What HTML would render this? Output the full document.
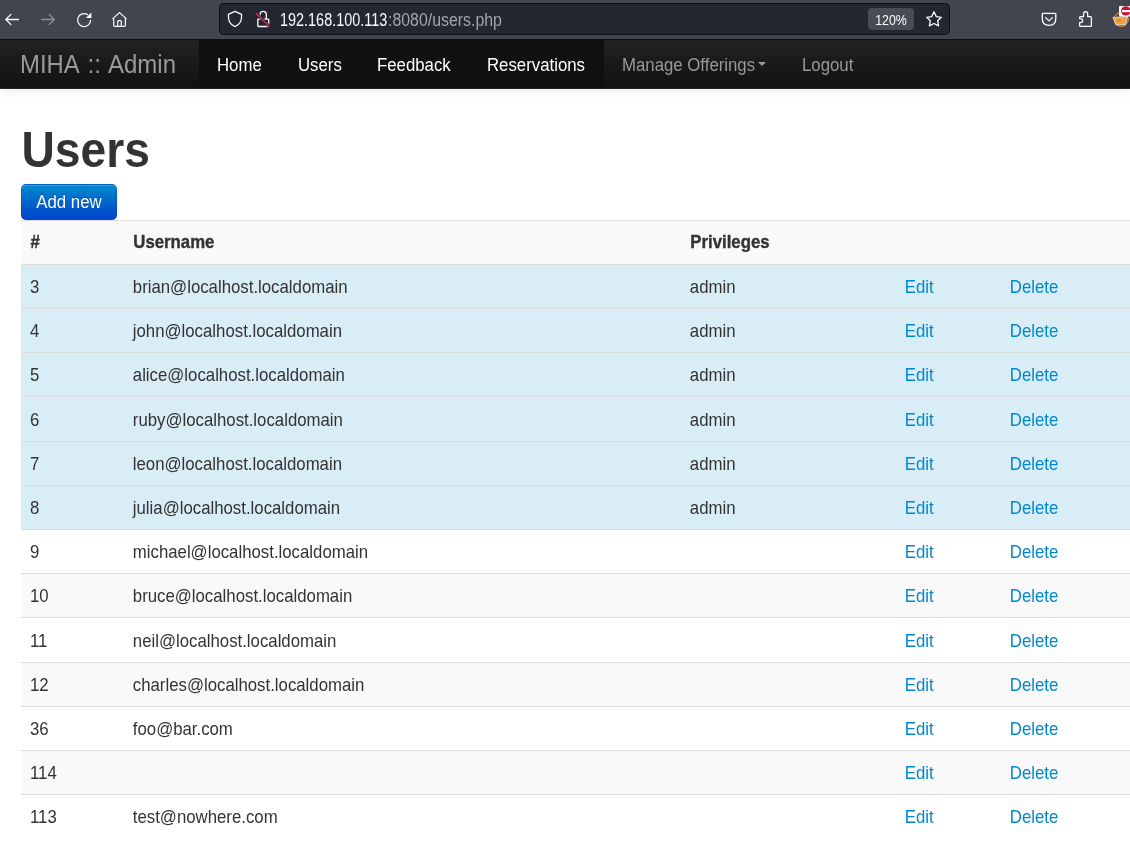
<!DOCTYPE html>
<html><head><meta charset="utf-8">
<style>
html,body{margin:0;padding:0;}
#root{position:absolute;left:0;top:0;width:1130px;height:841px;overflow:hidden;background:#fff;will-change:transform;}
body{width:1130px;height:841px;overflow:hidden;position:relative;background:#fff;font-family:"Liberation Sans",sans-serif;color:#333;font-size:16.8px;line-height:24px;}
#tb{position:absolute;left:0;top:0;width:1130px;height:40px;background:#43454e;z-index:5;}
#urlh,#urlp{position:absolute;top:8px;font-size:15.1px;line-height:22px;white-space:nowrap;transform-origin:0 6px;}
#urlh{left:280.3px;color:#fbfbfe;transform:scaleX(0.956) scaleY(1.2);}
#urlp{left:388.2px;color:#a3a4aa;transform:scaleX(1.052) scaleY(1.2);}
#zoomt{position:absolute;left:868px;top:8.6px;width:46px;height:22px;color:#fbfbfe;font-size:12.4px;line-height:23px;text-align:center;transform:scaleY(1.12);transform-origin:0 6px;}
svg{position:absolute;overflow:visible;}
#nav{position:absolute;left:0;top:40px;width:1130px;height:49px;box-sizing:border-box;background:linear-gradient(#222,#111);border-bottom:1px solid #252525;box-shadow:0 1px 10px rgba(0,0,0,.1);}
#brand{position:absolute;left:20px;top:11px;font-size:24.5px;line-height:24px;color:#999;white-space:nowrap;transform:translateY(1.6px) scaleY(1.04);transform-origin:0 12px;}
#brand span{position:absolute;top:0;transform-origin:0 0;}
#bc{left:67.5px;}
#ba{left:88.2px;}
.ni{position:absolute;top:0;height:48px;line-height:48px;color:#999;white-space:nowrap;}
.ni span{position:absolute;left:18px;top:0;transform:translateY(1.6px) scaleY(1.07);transform-origin:0 24px;}
.ni.a{background:#111;color:#fff;box-shadow:inset 0 3px 8px rgba(0,0,0,.125);}
.caret{position:absolute;left:758px;top:22px;width:0;height:0;border-top:4.8px solid #999;border-left:4.8px solid transparent;border-right:4.8px solid transparent;}
h1{position:absolute;left:21.5px;top:126px;margin:0;font-size:46.2px;line-height:48px;font-weight:bold;color:#333;transform:translateY(-0.7px) scaleY(1.087);transform-origin:0 24px;}
#btn span{display:inline-block;transform:scaleY(1.07);transform-origin:0 10px;}
#btn{position:absolute;left:21px;top:184px;width:96px;height:36px;box-sizing:border-box;border:1px solid rgba(0,0,0,.1);border-bottom-color:rgba(0,0,0,.25);border-radius:5px;background:#006dcc linear-gradient(#0088cc,#0044cc) repeat-x;color:#fff;text-shadow:0 -1px 0 rgba(0,0,0,.25);box-shadow:inset 0 1px 0 rgba(255,255,255,.2);line-height:33px;text-align:center;}
#tbl{position:absolute;left:0;top:0;}
.r{position:absolute;left:21px;width:1128px;box-sizing:border-box;border-top:1px solid #ddd;background:#fff;}
.r.s{background:#f9f9f9;}
.r.i{background:#d9edf7;}
.r.h .c{font-weight:bold;-webkit-text-stroke:0.35px #333;margin-top:-1px;margin-left:0.5px;}
.c{position:absolute;top:10.4px;line-height:24px;white-space:nowrap;transform:scaleY(1.06);transform-origin:0 6px;}
.r.d1 .c{top:11.4px;}
a{color:#0088cc;text-decoration:none;}
</style></head><body><div id="root">
<div id="tb">
<svg width="1130" height="40" viewBox="0 0 1130 40" style="left:0;top:0" fill="none" stroke-linecap="round" stroke-linejoin="round">
<rect x="0" y="39" width="1130" height="1" fill="#0f1014" stroke="none"/>
<g stroke="#fbfbfe" stroke-width="1.3">
<path d="M18.5 19.5H5.8M10.9 14.4L5.8 19.5L10.9 24.6"/>
</g>
<g stroke="#8f9095" stroke-width="1.3">
<path d="M41.6 19.5H54.3M49.2 14.4L54.3 19.5L49.2 24.6"/>
</g>
<g stroke="#fbfbfe" stroke-width="1.2">
<path d="M90.6 20.4A6.5 6.5 0 1 1 87.6 14.6"/>
<path d="M85.8 17.9L91.4 12.5L91.4 18.1Z" fill="#fbfbfe" stroke="none"/>
<path d="M119.5 12.6L112.8 18.6M119.5 12.6L126.2 18.6M113.7 17.9V25.3Q113.7 26.4 114.8 26.4H124.3Q125.4 26.4 125.4 25.3V17.9M117.7 26.4V21.6Q117.7 20.7 118.6 20.7H120.4Q121.3 20.7 121.3 21.6V26.4"/>
</g>
<rect x="219.5" y="3.5" width="730" height="31" rx="4" fill="#242631" stroke="#0f1014" stroke-width="1"/>
<g stroke="#fbfbfe" stroke-width="1.3">
<path d="M235 11.4L228.4 14.4Q228.2 19.2 229.6 22Q231.4 25.3 235 26.6Q238.6 25.3 240.4 22Q241.8 19.2 241.6 14.4Z"/>
<path d="M257.8 19.2H268.3Q268.7 19.2 268.7 19.6V26.1Q268.7 26.5 268.3 26.5H258.2Q257.8 26.5 257.8 26.1ZM260 19V14.6Q260 11.4 263.3 11.4Q266.3 11.4 266.3 14.6V19"/>
</g>
<path d="M256.2 13.4L269.4 26.4" stroke="#242631" stroke-width="3"/>
<path d="M256.2 13.4L269.4 26.4" stroke="#e22850" stroke-width="1.4"/>
<rect x="868" y="8" width="46" height="22" rx="4" fill="#4a4c55" stroke="none"/>
<g stroke="#fbfbfe" stroke-width="1.3">
<path d="M934 11.8L936.3 16.6L941.3 17.3L937.7 20.8L938.6 25.9L934 23.5L929.4 25.9L930.3 20.8L926.7 17.3L931.7 16.6Z"/>
<path d="M1043 13.3H1055.1Q1055.8 13.3 1055.8 14V18.4Q1055.8 25.3 1049 25.3Q1042.3 25.3 1042.3 18.4V14Q1042.3 13.3 1043 13.3Z"/>
<path d="M1045.6 17.6L1049 20.9L1052.4 17.6"/>
<path d="M1080.6 16.6H1083.5V14.2Q1083.5 11.6 1085.6 11.6Q1087.7 11.6 1087.7 14.2V16.6H1090.4Q1091.4 16.6 1091.4 17.6V25.4Q1091.4 26.4 1090.4 26.4H1080.6Q1079.6 26.4 1079.6 25.4V22.6H1080.4Q1082.6 22.6 1082.6 20.6Q1082.6 18.6 1080.4 18.6H1079.6V17.6Q1079.6 16.6 1080.6 16.6Z"/>
</g>
<circle cx="1121.3" cy="19.4" r="7.1" fill="#4a4a4e" stroke="#e89a45" stroke-width="1"/>
<path d="M1113.4 17.4L1127.6 16.6L1125.4 24.6L1116.4 24.9Z" fill="#f4a035" stroke="#dcdcdc" stroke-width="1"/>
<path d="M1117.6 20.6Q1119.6 19.6 1121.8 20.8Q1119.6 21.6 1117.6 20.6Z" fill="#6a6a6a" stroke="none"/>
<rect x="1119" y="6" width="12" height="10.6" rx="1" fill="#fbfbfb" stroke="none"/>
<circle cx="1125.8" cy="10.9" r="4.7" fill="#c8102e" stroke="none"/>
<rect x="1122.1" y="10" width="8" height="2.2" fill="#fff" stroke="none"/>
</svg>
<div id="urlh">192.168.100.113</div><div id="urlp">:8080/users.php</div>
<div id="zoomt">120%</div>
</div>
<div id="nav">
<div id="brand"><span style="left:0;transform:scaleX(0.975)">MIHA</span><span id="bc">::</span><span id="ba" style="transform:scaleX(0.98)">Admin</span></div>
<div class="ni a" style="left:199px;width:81px;"><span>Home</span></div>
<div class="ni a" style="left:280px;width:79px;"><span>Users</span></div>
<div class="ni a" style="left:359px;width:110px;"><span>Feedback</span></div>
<div class="ni a" style="left:469px;width:135px;"><span>Reservations</span></div>
<div class="ni" style="left:604px;width:180px;"><span>Manage Offerings</span></div>
<div class="caret"></div>
<div class="ni" style="left:784px;width:90px;"><span>Logout</span></div>
</div>
<h1>Users</h1>
<div id="btn"><span>Add new</span></div>
<div id="tbl">
<div class="r s h" style="top:220px;height:44px">
<span class="c" style="left:9.0px">#</span>
<span class="c" style="left:111.8px">Username</span>
<span class="c" style="left:668.8px">Privileges</span>
</div>
<div class="r i" style="top:264px;height:44px">
<span class="c" style="left:9.0px">3</span>
<span class="c" style="left:111.8px">brian@localhost.localdomain</span>
<span class="c" style="left:668.8px">admin</span>
<span class="c" style="left:883.8px"><a>Edit</a></span>
<span class="c" style="left:988.8px"><a>Delete</a></span>
</div>
<div class="r i" style="top:308px;height:44px">
<span class="c" style="left:9.0px">4</span>
<span class="c" style="left:111.8px">john@localhost.localdomain</span>
<span class="c" style="left:668.8px">admin</span>
<span class="c" style="left:883.8px"><a>Edit</a></span>
<span class="c" style="left:988.8px"><a>Delete</a></span>
</div>
<div class="r i" style="top:352px;height:44px">
<span class="c" style="left:9.0px">5</span>
<span class="c" style="left:111.8px">alice@localhost.localdomain</span>
<span class="c" style="left:668.8px">admin</span>
<span class="c" style="left:883.8px"><a>Edit</a></span>
<span class="c" style="left:988.8px"><a>Delete</a></span>
</div>
<div class="r i d1" style="top:396px;height:45px">
<span class="c" style="left:9.0px">6</span>
<span class="c" style="left:111.8px">ruby@localhost.localdomain</span>
<span class="c" style="left:668.8px">admin</span>
<span class="c" style="left:883.8px"><a>Edit</a></span>
<span class="c" style="left:988.8px"><a>Delete</a></span>
</div>
<div class="r i" style="top:441px;height:44px">
<span class="c" style="left:9.0px">7</span>
<span class="c" style="left:111.8px">leon@localhost.localdomain</span>
<span class="c" style="left:668.8px">admin</span>
<span class="c" style="left:883.8px"><a>Edit</a></span>
<span class="c" style="left:988.8px"><a>Delete</a></span>
</div>
<div class="r i" style="top:485px;height:44px">
<span class="c" style="left:9.0px">8</span>
<span class="c" style="left:111.8px">julia@localhost.localdomain</span>
<span class="c" style="left:668.8px">admin</span>
<span class="c" style="left:883.8px"><a>Edit</a></span>
<span class="c" style="left:988.8px"><a>Delete</a></span>
</div>
<div class="r" style="top:529px;height:44px">
<span class="c" style="left:9.0px">9</span>
<span class="c" style="left:111.8px">michael@localhost.localdomain</span>
<span class="c" style="left:883.8px"><a>Edit</a></span>
<span class="c" style="left:988.8px"><a>Delete</a></span>
</div>
<div class="r s" style="top:573px;height:44px">
<span class="c" style="left:9.0px">10</span>
<span class="c" style="left:111.8px">bruce@localhost.localdomain</span>
<span class="c" style="left:883.8px"><a>Edit</a></span>
<span class="c" style="left:988.8px"><a>Delete</a></span>
</div>
<div class="r d1" style="top:617px;height:45px">
<span class="c" style="left:9.0px">11</span>
<span class="c" style="left:111.8px">neil@localhost.localdomain</span>
<span class="c" style="left:883.8px"><a>Edit</a></span>
<span class="c" style="left:988.8px"><a>Delete</a></span>
</div>
<div class="r s" style="top:662px;height:44px">
<span class="c" style="left:9.0px">12</span>
<span class="c" style="left:111.8px">charles@localhost.localdomain</span>
<span class="c" style="left:883.8px"><a>Edit</a></span>
<span class="c" style="left:988.8px"><a>Delete</a></span>
</div>
<div class="r" style="top:706px;height:44px">
<span class="c" style="left:9.0px">36</span>
<span class="c" style="left:111.8px">foo@bar.com</span>
<span class="c" style="left:883.8px"><a>Edit</a></span>
<span class="c" style="left:988.8px"><a>Delete</a></span>
</div>
<div class="r s" style="top:750px;height:44px">
<span class="c" style="left:9.0px">114</span>
<span class="c" style="left:883.8px"><a>Edit</a></span>
<span class="c" style="left:988.8px"><a>Delete</a></span>
</div>
<div class="r" style="top:794px;height:44px">
<span class="c" style="left:9.0px">113</span>
<span class="c" style="left:111.8px">test@nowhere.com</span>
<span class="c" style="left:883.8px"><a>Edit</a></span>
<span class="c" style="left:988.8px"><a>Delete</a></span>
</div>
</div>
</div></body></html>
